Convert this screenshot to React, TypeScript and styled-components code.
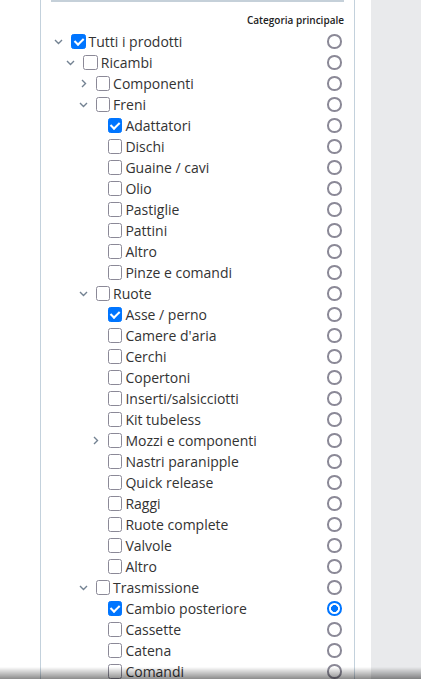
import React from "react";
import styled, { createGlobalStyle } from "styled-components";

const Global = createGlobalStyle`
  html, body { margin: 0; padding: 0; background: #fff; }
  body { font-family: "Open Sans", "Noto Sans", sans-serif; color: #333; }
`;

type Node = {
  label: string;
  checked?: boolean;
  primary?: boolean;
  expanded?: boolean;
  children?: Node[];
  collapsed?: boolean;
};

const tree: Node = {
  label: "Tutti i prodotti",
  checked: true,
  expanded: true,
  children: [
    {
      label: "Ricambi",
      expanded: true,
      children: [
        { label: "Componenti", collapsed: true },
        {
          label: "Freni",
          expanded: true,
          children: [
            { label: "Adattatori", checked: true },
            { label: "Dischi" },
            { label: "Guaine / cavi" },
            { label: "Olio" },
            { label: "Pastiglie" },
            { label: "Pattini" },
            { label: "Altro" },
            { label: "Pinze e comandi" },
          ],
        },
        {
          label: "Ruote",
          expanded: true,
          children: [
            { label: "Asse / perno", checked: true },
            { label: "Camere d'aria" },
            { label: "Cerchi" },
            { label: "Copertoni" },
            { label: "Inserti/salsicciotti" },
            { label: "Kit tubeless" },
            { label: "Mozzi e componenti", collapsed: true },
            { label: "Nastri paranipple" },
            { label: "Quick release" },
            { label: "Raggi" },
            { label: "Ruote complete" },
            { label: "Valvole" },
            { label: "Altro" },
          ],
        },
        {
          label: "Trasmissione",
          expanded: true,
          children: [
            { label: "Cambio posteriore", checked: true, primary: true },
            { label: "Cassette" },
            { label: "Catena" },
            { label: "Comandi" },
          ],
        },
      ],
    },
  ],
};

const Page = styled.div`
  display: flex;
  align-items: stretch;
  min-height: 100vh;
`;

const LeftGap = styled.div`
  width: 40px;
  flex: none;
`;

const Panel = styled.div`
  flex: none;
  width: 315px;
  border-left: 1px solid #c3d1dc;
  border-right: 1px solid #c3d1dc;
  padding: 0 10px;
  box-sizing: border-box;
`;

const Divider = styled.div`
  height: 2px;
  background: #c5d0d9;
`;

const Header = styled.div`
  text-align: right;
  font-size: 10px;
  font-weight: 600;
  color: #222;
  line-height: 14px;
  margin-top: 11px;
  margin-bottom: 4px;
`;

const List = styled.div`
  display: flex;
  flex-direction: column;
`;

const Row = styled.label<{ $level: number }>`
  display: flex;
  align-items: center;
  height: 21px;
  padding-left: ${(p) => p.$level * 12.3}px;
`;

const Toggle = styled.span`
  width: 20px;
  flex: none;
  display: flex;
  align-items: center;
  padding-left: 3px;
  box-sizing: border-box;
  color: #738292;
`;

const Check = styled.input.attrs({ type: "checkbox" })`
  appearance: none;
  -webkit-appearance: none;
  position: relative;
  width: 14.5px;
  height: 14.5px;
  margin: 0 3px 0 0;
  flex: none;
  box-sizing: border-box;
  border: 1.6px solid #8b8997;
  border-radius: 2.5px;
  background: #fff;

  &:checked {
    background: #0075ff;
    border-color: #0075ff;
  }
  &:checked::after {
    content: "";
    position: absolute;
    left: 3.6px;
    top: 0.6px;
    width: 3.6px;
    height: 7.4px;
    border: solid #fff;
    border-width: 0 2px 2px 0;
    transform: rotate(45deg);
  }
`;

const Label = styled.span`
  font-size: 14px;
  line-height: 21px;
  color: #333;
  white-space: nowrap;
`;

const Radio = styled.input.attrs({ type: "radio", name: "primary" })`
  appearance: none;
  -webkit-appearance: none;
  width: 14.5px;
  height: 14.5px;
  margin: 0 2.5px 0 auto;
  flex: none;
  box-sizing: border-box;
  border: 2px solid #8b8997;
  border-radius: 50%;
  background: #fff;

  &:checked {
    border-color: #0075ff;
    background: radial-gradient(circle, #0075ff 0 3.2px, #fff 3.7px);
  }
`;

const Spacer = styled.div`
  width: 16px;
  flex: none;
`;

const GrayCol = styled.div`
  flex: 1;
  background: #e9eaec;
`;

const BottomShade = styled.div`
  position: fixed;
  left: 0;
  right: 0;
  bottom: 0;
  height: 12px;
  background: linear-gradient(to bottom, rgba(0, 0, 0, 0), rgba(0, 0, 0, 0.45));
  pointer-events: none;
`;

const ChevronDown = () => (
  <svg width="9" height="6" viewBox="0 0 9 6">
    <path d="M1 1l3.5 3.5L8 1" fill="none" stroke="currentColor" strokeWidth="1.4" />
  </svg>
);

const ChevronRight = () => (
  <svg width="6" height="9" viewBox="0 0 6 9" style={{ marginLeft: 2 }}>
    <path d="M1 1l3.5 3.5L1 8" fill="none" stroke="currentColor" strokeWidth="1.4" />
  </svg>
);

function flatten(node: Node, level: number, out: { node: Node; level: number }[]) {
  out.push({ node, level });
  if (node.expanded && node.children) {
    node.children.forEach((c) => flatten(c, level + 1, out));
  }
  return out;
}

export default function App() {
  const rows = flatten(tree, 0, []);
  return (
    <>
      <Global />
      <Page>
        <LeftGap />
        <Panel>
          <Divider />
          <Header>Categoria principale</Header>
          <List>
            {rows.map(({ node, level }, i) => (
              <Row key={i} $level={level}>
                <Toggle>
                  {node.expanded ? <ChevronDown /> : node.collapsed ? <ChevronRight /> : null}
                </Toggle>
                <Check defaultChecked={!!node.checked} />
                <Label>{node.label}</Label>
                <Radio defaultChecked={!!node.primary} />
              </Row>
            ))}
          </List>
        </Panel>
        <Spacer />
        <GrayCol />
      </Page>
      <BottomShade />
    </>
  );
}
